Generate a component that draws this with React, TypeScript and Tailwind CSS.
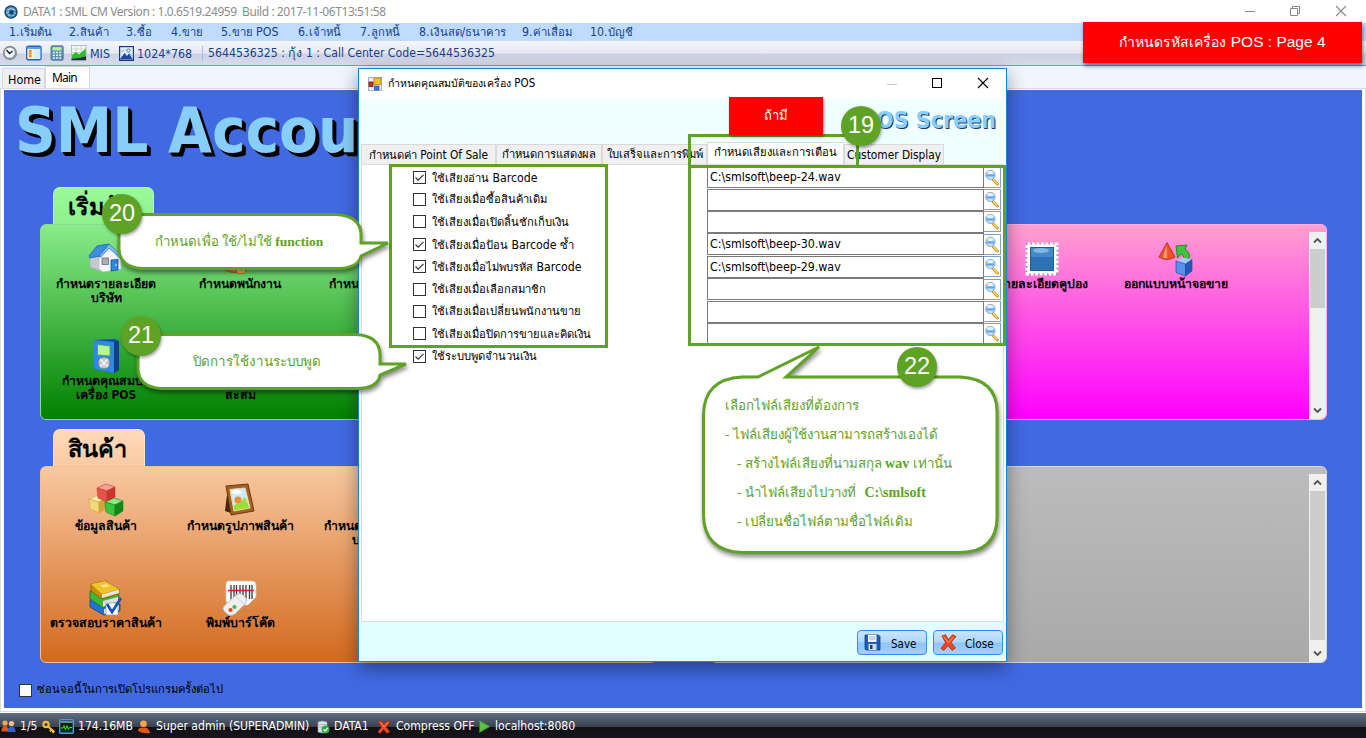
import type { ReactNode } from "react";

const UI = "font-['DejaVu_Sans_Condensed','Noto_Sans',sans-serif]";

function T({ children, latin = "text-[12px]" }: { children: string; latin?: string }) {
  const parts = children.split(/([\u0E00-\u0E7F]+)/);
  return (
    <span>
      {parts.map((p, i) =>
        i % 2 === 1 || p === "" ? <span key={i}>{p}</span> : <span key={i} className={latin}>{p}</span>,
      )}
    </span>
  );
}

/* ---------- icons ---------- */

const Globe = () => (
  <svg className="size-[14px]" viewBox="0 0 14 14">
    <circle cx="7" cy="7" r="6.7" fill="#1d4a78" />
    <circle cx="7" cy="7" r="5.2" fill="#4d8cc0" />
    <path d="M3 5Q7 2 11 5M2.5 8Q7 5 11.5 8.500M4 10.500Q7 8.500 10 10.500" stroke="#b5dcf3" strokeWidth="1" fill="none" />
    <circle cx="7.500" cy="7.500" r="2.300" fill="#17406e" />
  </svg>
);

const Clock = () => (
  <svg className="size-[16px]" viewBox="0 0 16 16">
    <circle cx="8" cy="8" r="7.2" fill="#8b979f" />
    <circle cx="7.7" cy="7.7" r="5.6" fill="#eef5f6" stroke="#5d6e78" strokeWidth=".7" />
    <path d="M4.500 5L7.500 8.500L10.500 6" stroke="#222" strokeWidth="1.400" fill="none" />
  </svg>
);

const LayoutIcon = () => (
  <svg className="size-[16px]" viewBox="0 0 16 16">
    <rect x=".7" y="1.200" width="14.300" height="13.600" rx="1.500" fill="#fff" stroke="#1f66c4" strokeWidth="1.400" />
    <rect x="1.400" y="2" width="13" height="2" fill="#5da0ea" />
    <rect x="2" y="4.500" width="4.500" height="9.500" fill="#ffe9a8" />
    <path d="M3 6H5.500M3 8.500H5.500M3 11H5.500" stroke="#e0670f" strokeWidth="1.300" />
    <rect x="7.500" y="4.500" width="6.700" height="9.500" fill="#d9ecfb" />
  </svg>
);

const Calc = () => (
  <svg className="size-[16px]" viewBox="0 0 16 16">
    <rect x="2" y=".8" width="12.200" height="14.400" rx="1.300" fill="#5d93b5" stroke="#3f6e8e" strokeWidth=".8" />
    <rect x="3.500" y="2.200" width="9" height="3.200" fill="#bdf0a2" />
    <path d="M3.800 7.500H12.500M3.800 10.300H12.500M3.800 13H12.500" stroke="#e9f3f8" strokeWidth="1.600" strokeDasharray="2 1.200" />
  </svg>
);

const Chart = () => (
  <svg className="size-[16px]" viewBox="0 0 16 16">
    <rect x=".5" y=".5" width="14.500" height="14.500" fill="#f5f8f5" stroke="#9aa" strokeWidth=".7" />
    <path d="M.5 4H15M.5 7.500H15M5 .5V9M10 .5V9" stroke="#b7c4b7" strokeWidth=".6" />
    <path d="M1 10L5 7L8 9.500L14.800 3.500V11L8 13L1 13.500Z" fill="#2dbb2a" />
    <path d="M.5 13.500L8 13L15 11V15.300H.5Z" fill="#20303a" />
  </svg>
);

const Photo = () => (
  <svg className="size-[15px]" viewBox="0 0 15 15">
    <rect x=".6" y=".6" width="13.800" height="13.800" fill="#dfeefc" stroke="#16397a" strokeWidth="1.200" />
    <circle cx="9.500" cy="4.500" r="1.600" fill="#fff" stroke="#2a5aa8" strokeWidth=".8" />
    <path d="M1 13L5.500 7L8 10L10 7.500L14 13.500H1Z" fill="#1d4b99" />
    <path d="M2 6L5 4M10 7L13 10" stroke="#6d9bd8" strokeWidth=".8" />
  </svg>
);

const WinForm = () => (
  <svg className="size-[14px]" viewBox="0 0 14 14">
    <rect x=".5" y=".5" width="13" height="13" fill="#e9ecf2" stroke="#a9b0bd" strokeWidth="1" />
    <rect x="6" y="1" width="6.800" height="6.500" fill="#f6bf2a" stroke="#b8860b" strokeWidth=".8" />
    <rect x="1" y="5" width="4" height="4.500" fill="#c4342a" stroke="#7d1712" strokeWidth=".8" />
    <rect x="6.500" y="9" width="4.500" height="4" fill="#3a75d8" stroke="#1d4796" strokeWidth=".6" />
  </svg>
);

const House = () => (
  <svg className="size-[36px]" viewBox="0 0 36 36">
    <path d="M2 16L9 13L17 30L15 31L2 26Z" fill="#c4c8d0" stroke="#a3a8b3" strokeWidth=".6" />
    <path d="M11 17L21 6L33 17V28L15 31L11 28Z" fill="#f3f4f7" stroke="#b9bec9" strokeWidth=".7" />
    <path d="M1 15L9 5L21 3L12 15L2 17Z" fill="#3c8fe0" stroke="#1b5fae" strokeWidth=".8" />
    <path d="M21 3L35 16L33 18L21 7L13 16L11 15Z" fill="#7dbcf5" stroke="#1b5fae" strokeWidth=".6" />
    <rect x="14" y="17" width="6.500" height="6.500" fill="#a9adb5" stroke="#6d727c" strokeWidth=".8" />
    <path d="M23 19L30 18.500V29L23 30Z" fill="#2e86dd" stroke="#17549b" strokeWidth=".8" />
    <circle cx="28" cy="24" r=".8" fill="#fff" />
  </svg>
);

const Coins = () => (
  <svg className="size-[36px]" viewBox="0 0 36 36">
    <circle cx="18" cy="12" r="7" fill="#e9bd8d" />
    <path d="M3 29Q5 20 16 20T24 29Q12 34 3 29Z" fill="#e0881c" stroke="#a65f0a" strokeWidth="1" />
    <ellipse cx="19" cy="30" rx="5" ry="2.500" fill="#f8cc49" stroke="#a65f0a" strokeWidth=".8" />
  </svg>
);

const Player = () => (
  <svg className="size-[36px]" viewBox="0 0 36 36">
    <path d="M6 2L27 1L31 3V32L26 35L6 31Z" fill="#0e4fa8" />
    <path d="M6 2L26 4V35L6 31Z" fill="#2e88ea" />
    <path d="M26 4L31 3V32L26 35Z" fill="#123f86" />
    <path d="M9.500 6.500L22 8V18L9.500 17Z" fill="#b6f59b" stroke="#4f9a46" strokeWidth=".8" />
    <circle cx="16" cy="25" r="5.800" fill="#c4c7cc" stroke="#7b8088" strokeWidth=".8" />
    <path d="M12 21L20 29M20 21L12 29" stroke="#f7f7f7" strokeWidth="1.200" />
  </svg>
);

const Cube = ({ x, y, top, left, right }: { x: number; y: number; top: string; left: string; right: string }) => (
  <g transform={`translate(${x} ${y})`} strokeWidth=".6" strokeLinejoin="round">
    <path d="M0 4L9 0L18 3L10 7Z" fill={top} stroke={right} />
    <path d="M0 4L10 7V18L1 14Z" fill={left} stroke={right} />
    <path d="M10 7L18 3V13L10 18Z" fill={right} stroke={right} />
  </g>
);

const Boxes = () => (
  <svg className="size-[36px]" viewBox="0 0 36 36">
    <Cube x={1} y={12} top="#fdeeb4" left="#f4d77c" right="#d2a43a" />
    <Cube x={9} y={1} top="#f8a095" left="#e6554a" right="#c8352d" />
    <Cube x={17} y={15} top="#8ee886" left="#3cc53c" right="#118718" />
  </svg>
);

const Frame = () => (
  <svg className="size-[36px]" viewBox="0 0 36 36">
    <path d="M6 4L3 28L9 30Z" fill="#3f2412" />
    <path d="M4 3L26 1L32 28L9 32Z" fill="#a65f22" stroke="#6d3a10" strokeWidth="1" />
    <path d="M8 6.500L23 5L28 25L12 28Z" fill="#c9ebfb" stroke="#f2d9a4" strokeWidth="1" />
    <path d="M10 9Q12 5 16 7T20 10Q14 12 11 11Z" fill="#fff" />
    <circle cx="16" cy="17" r="3.600" fill="#f58a2a" />
    <path d="M11.500 23L15 20L18 20L23 14L27.500 25L12.500 27.500Z" fill="#9bdc3c" />
  </svg>
);

const Books = () => (
  <svg className="size-[36px]" viewBox="0 0 36 36">
    <path d="M2 20L6 18L32 24V31L16 35L2 27Z" fill="#2272d8" stroke="#0d3f8d" strokeWidth=".8" />
    <path d="M16 29L31 25V30L16 34Z" fill="#dcdfe6" />
    <path d="M2 11L6 10L31 15V22L15 28L2 19Z" fill="#3cba35" stroke="#15701a" strokeWidth=".8" />
    <path d="M15 21L30 17V21.500L15 26.500Z" fill="#dcdfe6" />
    <path d="M3 4L17 1L31 9V14L14 19L3 11Z" fill="#c88f0c" stroke="#8a5c05" strokeWidth=".8" />
    <path d="M3 4L17 1L31 9L14 14Z" fill="#f2c42c" />
    <path d="M14 14.500L31 9.500V13L14 18Z" fill="#e9e6dc" />
    <path d="M12 5.500L18 4L22 6L16 7.500Z" fill="#fae78f" />
    <rect x="18" y="23" width="12" height="12" fill="#fff" stroke="#8b9bb5" strokeWidth=".7" />
    <path d="M19 24L24 32L33 18" stroke="#1652b8" strokeWidth="2.600" fill="none" />
  </svg>
);

const Barcode = () => (
  <svg className="size-[36px]" viewBox="0 0 36 36">
    <path d="M6 1H30Q34 1 34 5V17L26 25H8Q4 24 4 20V5Q4 1 6 1Z" fill="#fcfcfc" stroke="#c9c9c9" strokeWidth=".8" />
    <path d="M9 5V19M12 5V19M14.500 5V17M18 5V17M21 5V17M24 5V19M27.500 5V19M30 5V19" stroke="#3c3c3c" strokeWidth="1.300" />
    <path d="M6 10.500H32" stroke="#e01b1b" strokeWidth="1.600" />
    <path d="M2 26L14 15Q18 12 21 15L24 18Q26 21 23 24L13 34Q9 37 5 34L2 31Q0 28 2 26Z" fill="#eeeff0" stroke="#b2b4b6" strokeWidth=".8" />
    <path d="M13 16L22 24" stroke="#c4c6c8" strokeWidth=".8" />
    <circle cx="8.500" cy="30" r="2.100" fill="#f0441c" />
    <circle cx="12.500" cy="27" r="2.100" fill="#59b535" />
  </svg>
);

const Stamp = () => (
  <svg className="size-[36px]" viewBox="0 0 36 36">
    <rect x="2" y="2" width="32" height="32" fill="#b88aa0" />
    <rect x="3.500" y="3.500" width="29" height="29" fill="#fff" stroke="#fff" strokeWidth="4" strokeDasharray="2.800 1.700" />
    <rect x="6" y="6" width="24" height="24" fill="#1d5d9c" />
    <rect x="7" y="7" width="22" height="11" fill="#4689c8" />
    <ellipse cx="17" cy="9.500" rx="8" ry="2.500" fill="#7fb8e6" />
    <rect x="7" y="16" width="22" height="13" fill="#2b73b4" />
  </svg>
);

const Design = () => (
  <svg className="size-[36px]" viewBox="0 0 36 36">
    <path d="M9 1.500L17 16Q9 21 1 16Z" fill="#f0532a" stroke="#a82a0c" strokeWidth=".8" />
    <path d="M8.500 4L5 16.500L9 17.500Z" fill="#ffa17e" />
    <path d="M18 5L29 4L27 8Q34 13 30 19L26 18Q26 14 23 13L19.500 17Z" fill="#3fc43a" stroke="#15791b" strokeWidth=".8" />
    <path d="M18 20L25 16.500L34 18.500L27.500 23Z" fill="#a6c8fb" />
    <path d="M18 20L27.500 23V35L18 31.500Z" fill="#5b90ea" stroke="#1c4da8" strokeWidth=".7" />
    <path d="M27.500 23L34 18.500V30L27.500 35Z" fill="#2458b8" stroke="#1c4da8" strokeWidth=".7" />
  </svg>
);

const Magnifier = () => (
  <svg className="size-[17px]" viewBox="0 0 17 17">
    <path d="M9.800 11L14.300 15.500" stroke="#c98a12" strokeWidth="3" strokeLinecap="round" />
    <path d="M10.200 11L14.200 15" stroke="#fbd06a" strokeWidth="1.600" strokeLinecap="round" />
    <circle cx="6.800" cy="5.800" r="5" fill="#9ccbf8" stroke="#9aabc2" strokeWidth="1" />
    <ellipse cx="6.800" cy="3.300" rx="3.200" ry="1.600" fill="#e9f5ff" />
    <path d="M2.600 6.300H11" stroke="#5fa3ee" strokeWidth="1.600" />
    <ellipse cx="6.800" cy="8.900" rx="2.500" ry="1" fill="#d2e9fd" />
  </svg>
);

const Floppy = () => (
  <svg className="size-[17px]" viewBox="0 0 17 17">
    <path d="M1 1H14.500L16 2.500V16H2L1 15Z" fill="#1d5fb4" stroke="#153f7c" strokeWidth=".8" />
    <rect x="4" y="1" width="8.500" height="7" fill="#f3f5f8" />
    <path d="M5 3H11.500M5 5H11.500" stroke="#98a4b5" strokeWidth=".8" />
    <rect x="4.500" y="10" width="8" height="6" fill="#d3dae4" />
    <rect x="6" y="11" width="2.500" height="4" fill="#1a3e78" />
  </svg>
);

const RedX = ({ className }: { className: string }) => (
  <svg className={className} viewBox="0 0 17 17">
    <path d="M2 2L5.500 .8L8.500 5.500L12.500 .8L16 2.500L11 8.500L15.500 14L12 16.300L8 11.500L4 16.300L1 14.500L5.500 8.500Z" fill="#ee4a22" stroke="#a52408" strokeWidth=".8" />
    <path d="M3.500 2.500L8.500 8.500L13.500 3" stroke="#ff9a76" strokeWidth="1" fill="none" />
  </svg>
);

const People = () => (
  <svg className="size-[15px]" viewBox="0 0 15 15">
    <circle cx="4" cy="4" r="2.600" fill="#f7a552" />
    <path d="M.5 12.500Q.5 7 4 7T7.500 12.500Z" fill="#e0541c" />
    <circle cx="10.500" cy="4.500" r="2.600" fill="#fbc07c" />
    <path d="M6.500 13Q6.500 7.500 10.500 7.500T14.500 13Z" fill="#2f66c8" />
  </svg>
);

const KeyIcon = () => (
  <svg className="size-[14px]" viewBox="0 0 14 14">
    <circle cx="4" cy="4.500" r="2.700" fill="none" stroke="#f7c431" strokeWidth="2" />
    <path d="M6 6.500L12.500 12M9.500 9.500L8 11.500M11.500 11L10.500 13" stroke="#f7c431" strokeWidth="2" />
  </svg>
);

const Monitor = () => (
  <svg className="size-[15px]" viewBox="0 0 15 15">
    <rect x=".7" y=".7" width="13.600" height="13.600" rx="1" fill="#082408" stroke="#3d9df0" strokeWidth="1.400" />
    <path d="M1.400 3H13.600" stroke="#a8d5ff" strokeWidth="1.200" />
    <path d="M2 9H4L5 6.500L6.500 11L8 6.500L9.500 10.500L10.500 8.500H13" stroke="#33e833" strokeWidth="1" fill="none" />
  </svg>
);

const Person = () => (
  <svg className="size-[14px]" viewBox="0 0 14 14">
    <circle cx="6.500" cy="3.800" r="3.300" fill="#f8a252" />
    <path d="M1 11Q1 7.500 5 7.500H8Q12 8 13 13Q6 14 1 11Z" fill="#e0561c" />
  </svg>
);

const Database = () => (
  <svg className="size-[14px]" viewBox="0 0 14 14">
    <path d="M2 2Q6 0 11 2V12Q6 14 2 12Z" fill="#dfe4ea" stroke="#8a94a0" strokeWidth=".7" />
    <path d="M3 4.500H10M3 7H10" stroke="#9ba6b2" strokeWidth=".8" />
    <circle cx="9.500" cy="9.500" r="4" fill="#2fae34" />
    <path d="M7.500 9.500L9 11L11.800 8" stroke="#fff" strokeWidth="1.300" fill="none" />
  </svg>
);

const Play = () => (
  <svg className="size-[13px]" viewBox="0 0 13 13">
    <path d="M1.500 .5L12 6.500L1.500 12.500Z" fill="#5cc143" stroke="#2f8420" strokeWidth=".8" />
  </svg>
);

/* ---------- desktop ---------- */

function Tile({ icon, label }: { icon?: ReactNode; label: string }) {
  return (
    <div className="flex w-[134px] shrink-0 flex-col items-center">
      <div className="h-[36px] w-[36px]">{icon}</div>
      <div className="text-center text-[12.3px] leading-[14px] font-bold whitespace-pre">
        <T latin="text-[12px]">{label}</T>
      </div>
    </div>
  );
}

function Scrollbar({ thumb }: { thumb: string }) {
  return (
    <div className="flex w-[17px] shrink-0 flex-col bg-[#f0f0f0]">
      <svg className="h-[17px] w-[17px]" viewBox="0 0 17 17">
        <path d="M5 10.500L8.500 7L12 10.500" fill="none" stroke="#555" strokeWidth="1.800" />
      </svg>
      <div className={"mx-[1px] bg-[#cdcdcd] " + thumb} />
      <svg className="mt-auto h-[17px] w-[17px]" viewBox="0 0 17 17">
        <path d="M5 6.500L8.500 10L12 6.500" fill="none" stroke="#555" strokeWidth="1.800" />
      </svg>
    </div>
  );
}

function Folder({
  title, tab, body, rows,
}: { title: string; tab: string; body: string; rows: { icon?: ReactNode; label: string }[][] }) {
  return (
    <section className="flex w-[617px] flex-col">
      <div className={"-mb-px ml-[13px] h-[38px] rounded-t-[7px] border border-b-0 pt-[1px] pl-[14px] text-[23.5px] leading-[37px] font-bold whitespace-nowrap " + tab}>
        {title}
      </div>
      <div className={"flex flex-col overflow-hidden rounded-[6px] border pt-[16px] " + body}>
        {rows.map((r, i) => (
          <div key={i} className="-ml-[2px] flex h-[97px] shrink-0">
            {r.map((t, j) => <Tile key={j} {...t} />)}
          </div>
        ))}
      </div>
    </section>
  );
}

const START = [
  [
    { icon: <House />, label: "กำหนดรายละเอียด\nบริษัท" },
    { icon: <Coins />, label: "กำหนดพนักงาน" },
    { label: "กำหนดลูกค้าขาย" },
  ],
  [
    { icon: <Player />, label: "กำหนดคุณสมบัติ\nเครื่อง POS" },
    { label: "กำหนดแต้ม\nสะสม" },
  ],
];

const GOODS = [
  [
    { icon: <Boxes />, label: "ข้อมูลสินค้า" },
    { icon: <Frame />, label: "กำหนดรูปภาพสินค้า" },
    { label: "กำหนดรายละเอียด\nบาร์โค๊ด" },
  ],
  [
    { icon: <Books />, label: "ตรวจสอบราคาสินค้า" },
    { icon: <Barcode />, label: "พิมพ์บาร์โค๊ด" },
  ],
];

const MENU = [
  ["1.เริ่มต้น", "w-[60px]"], ["2.สินค้า", "w-[57px]"], ["3.ซื้อ", "w-[45px]"], ["4.ขาย", "w-[50px]"],
  ["5.ขาย POS", "w-[77px]"], ["6.เจ้าหนี้", "w-[62px]"], ["7.ลูกหนี้", "w-[59px]"],
  ["8.เงินสด/ธนาคาร", "w-[103px]"], ["9.ค่าเสื่อม", "w-[68px]"], ["10.บัญชี", "w-[60px]"],
];

function Desktop() {
  return (
    <div className="flex h-[738px] w-[1366px] flex-col overflow-hidden bg-white">
      <header className="flex h-[23px] shrink-0 items-center bg-white pl-[4px]">
        <Globe />
        <span className="ml-[5px] font-['Noto_Sans',sans-serif] text-[12px] tracking-[-0.43px] whitespace-pre text-[#8c8c8c]">
          {"DATA1 : SML CM Version : 1.0.6519.24959  Build : 2017-11-06T13:51:58"}
        </span>
        <svg className="ml-auto h-[16px] w-[122px]" viewBox="0 0 122 16">
          <path d="M1 7.500H11" stroke="#888" />
          <path d="M46.500 4.500H53.500V11.500H46.500ZM48.500 4.500V2.500H55.500V9.500H53.500" fill="none" stroke="#888" />
          <path d="M92 2L102 12M102 2L92 12" stroke="#888" strokeWidth="1.100" />
        </svg>
      </header>
      <nav className="flex h-[18px] shrink-0 items-center bg-[#bfdbff] pt-px pl-[9px] text-[11.3px] whitespace-nowrap text-[#15428b]">
        {MENU.map(([m, w]) => <span key={m} className={"shrink-0 " + w}><T latin="text-[12.3px]">{m}</T></span>)}
      </nav>
      <div className="flex h-[25px] shrink-0 items-center border-b border-[#6f9fdc] bg-[linear-gradient(#f6f7fb,#e6e8f2_50%,#cdd1e4_55%,#d7daea)] pl-[2px] text-[12.4px] whitespace-nowrap text-[#15428b]">
        <Clock />
        <span className="ml-[8px]"><LayoutIcon /></span>
        <span className="ml-[7px]"><Calc /></span>
        <span className="ml-[6px]"><Chart /></span>
        <span className="ml-[3px] w-[29px] pt-[2px]">MIS</span>
        <Photo />
        <span className="ml-[3px] w-[65px] pt-[2px]">1024*768</span>
        <span className="h-[15px] w-px bg-[#9cc0ee]" />
        <span className="ml-[5px] pt-px"><T latin="text-[12.2px]">5644536325 : กุ้ง 1 : Call Center Code=5644536325</T></span>
      </div>
      <div className="flex h-[22px] shrink-0 items-end bg-[#eff6ff] pl-[2px] text-[13px]">
        <div className="flex h-[20px] w-[43px] items-center border border-b-0 border-[#d9d9d9] bg-[#f0f0f0] pt-[3px] pl-[5px] text-[12.4px]">Home</div>
        <div className="flex h-[22px] w-[45px] items-center border border-b-0 border-[#d9d9d9] bg-white pl-[6px] font-['Noto_Sans',sans-serif] text-[12px] tracking-[-0.8px]">Main</div>
      </div>
      <main className="flex h-[624px] shrink-0 flex-col border border-[#dcdcdc] bg-white px-[3px] pt-px pb-[3px]">
        <div className="flex grow flex-col overflow-hidden bg-[#4169e1]">
          <h1 className="h-[97px] pl-[11px] text-[63px] leading-[82px] font-bold whitespace-nowrap text-[#87cefa] [text-shadow:2px_2px_0_#000,3px_3px_0_#000,4px_4px_0_#000]">
            SML Account POS
          </h1>
          <div className="flex h-[476px] shrink-0 gap-[53px] pl-[36px]">
            <div className="flex flex-col gap-[9px]">
              <Folder title="เริ่มต้น" tab="w-[101px] border-[#b9f7bb] bg-[linear-gradient(#98fb98,#8df08d)]" body="h-[196px] border-[#8fd890] bg-[linear-gradient(#8aec8a,#008000)]" rows={START} />
              <Folder title="สินค้า" tab="w-[92px] border-[#fde3cc] bg-[linear-gradient(#ffdab9,#f9caa3)]" body="h-[197px] border-[#f3bf95] bg-[linear-gradient(#f8c8a0,#d2691e)]" rows={GOODS} />
            </div>
            <div className="flex flex-col gap-[46px] pt-[37px]">
              <section className="flex h-[196px] w-[617px] overflow-hidden rounded-[6px] border border-[#ffb0e8] bg-[linear-gradient(#ff9fd0,#ff00ff)] pt-[7px]">
                <div className="flex grow pt-[9px] pl-[264px]">
                  <Tile icon={<Stamp />} label="รายละเอียดคูปอง" />
                  <Tile icon={<Design />} label="ออกแบบหน้าจอขาย" />
                </div>
                <Scrollbar thumb="h-[59px]" />
              </section>
              <section className="flex h-[197px] w-[617px] shrink-0 overflow-hidden rounded-[6px] border border-[#d8d8d8] bg-[linear-gradient(#bcbcbc,#a9a9a9)] pt-[7px]">
                <div className="grow" />
                <Scrollbar thumb="h-[149px]" />
              </section>
            </div>
          </div>
          <label className="mt-[19px] flex items-center pl-[15px] text-[11.2px] whitespace-nowrap">
            <span className="mr-[5px] size-[13px] border border-[#333] bg-white" />
            ซ่อนจอนี้ในการเปิดโปรแกรมครั้งต่อไป
          </label>
        </div>
      </main>
      <footer className="mt-px flex h-[25px] shrink-0 items-center bg-[linear-gradient(#606c82,#3b4351_54%,#111_56%,#15141f)] pt-[2px] pl-px text-[12.1px] whitespace-nowrap text-white">
        <People /><span className="ml-[4px] w-[22px]">1/5</span>
        <KeyIcon /><span className="ml-[3px]"><Monitor /></span><span className="ml-[4px] w-[59px]">174.16MB</span>
        <Person /><span className="ml-[5px] w-[160px]">Super admin (SUPERADMIN)</span>
        <Database /><span className="ml-[4px] w-[43px]">DATA1</span>
        <RedX className="size-[14px]" /><span className="ml-[5px] w-[82px]">Compress OFF</span>
        <Play /><span className="ml-[4px]">localhost:8080</span>
      </footer>
    </div>
  );
}

/* ---------- dialog ---------- */

const OPTIONS: [string, boolean, string | null][] = [
  ["ใช้เสียงอ่าน Barcode", true, "C:\\smlsoft\\beep-24.wav"],
  ["ใช้เสียงเมื่อซื้อสินค้าเดิม", false, ""],
  ["ใช้เสียงเมื่อเปิดลิ้นชักเก็บเงิน", false, ""],
  ["ใช้เสียงเมื่อป้อน Barcode ซ้ำ", true, "C:\\smlsoft\\beep-30.wav"],
  ["ใช้เสียงเมื่อไม่พบรหัส Barcode", true, "C:\\smlsoft\\beep-29.wav"],
  ["ใช้เสียงเมื่อเลือกสมาชิก", false, ""],
  ["ใช้เสียงเมื่อเปลี่ยนพนักงานขาย", false, ""],
  ["ใช้เสียงเมื่อปิดการขายและคิดเงิน", false, ""],
  ["ใช้ระบบพูดจำนวนเงิน", true, null],
];

const TABS: [string, string][] = [
  ["กำหนดค่า Point Of Sale", "w-[135px]"],
  ["กำหนดการแสดงผล", "w-[106px]"],
  ["ใบเสร็จและการพิมพ์", "w-[105px]"],
  ["กำหนดเสียงและการเตือน", "w-[137px]"],
  ["Customer Display", "w-[100px]"],
];

function Dialog() {
  return (
    <div className="absolute top-[68px] left-[358px] flex h-[594px] w-[649px] flex-col border border-[#1883d7] bg-white shadow-[0_6px_18px_rgba(0,0,0,0.4)]">
      <div className="flex h-[30px] shrink-0 items-center pr-[2px] pl-[9px]">
        <WinForm />
        <span className="ml-[6px] text-[10.6px] whitespace-nowrap"><T latin="text-[11.5px]">กำหนดคุณสมบัติของเครื่อง POS</T></span>
        <svg className="ml-auto h-[14px] w-[122px]" viewBox="0 0 122 14">
          <path d="M5 7.500H15" stroke="#c4c4c4" />
          <rect x="50.500" y="1.500" width="9" height="9" fill="none" stroke="#000" />
          <path d="M96 1L106 11M106 1L96 11" stroke="#000" strokeWidth="1.100" />
        </svg>
      </div>
      <div className="flex h-[45px] shrink-0 items-start justify-end bg-[#f0ffff] pt-[5px] pr-[10px]">
        <h2 className="text-[23px] leading-[32px] font-bold whitespace-nowrap text-[#87cefa] [text-shadow:1px_1px_0_#15357a]">POS Screen</h2>
      </div>
      <div className="-mt-[2px] flex h-[22px] shrink-0 items-end bg-[#f0ffff] pl-[2px] text-[11.2px] whitespace-nowrap">
        {TABS.map(([t, w], i) => (
          <div
            key={t}
            className={
              "flex items-center justify-center border border-b-0 border-[#d9d9d9] " + w +
              (i === 3 ? " h-[22px] bg-white" : " h-[20px] bg-[#f0f0f0] pt-[2px]")
            }
          >
            <T latin="text-[11.8px]">{t}</T>
          </div>
        ))}
      </div>
      <div className="mx-[2px] flex h-[458px] shrink-0 flex-col border border-[#dcdcdc] bg-white pt-[1px]">
        {OPTIONS.map(([label, on, file]) => (
          <div key={label} className="flex h-[22.4px] shrink-0 items-center pl-[51px]">
            <span className="flex size-[13px] items-center justify-center border border-[#333] bg-white">
              {on && (
                <svg className="size-[11px]" viewBox="0 0 11 11">
                  <path d="M1.500 5.500L4.200 8.200L9.500 2.800" fill="none" stroke="#333" strokeWidth="1.200" />
                </svg>
              )}
            </span>
            <span className="ml-[6px] w-[275px] pt-[2px] text-[11.2px] whitespace-nowrap"><T latin="text-[12.2px]">{label}</T></span>
            {file !== null && (
              <>
                <span className="flex h-[22px] w-[277px] items-center border border-[#7a7a7a] bg-white pl-[2px] text-[12.3px]">{file}</span>
                <span className="flex h-[21px] w-[17px] items-center justify-center border border-l-0 border-[#7ba0cf] bg-white"><Magnifier /></span>
              </>
            )}
          </div>
        ))}
      </div>
      <div className="flex grow items-center justify-end gap-[6px] bg-[#e0ffff] pr-[3px] pt-[2px] text-[12px]">
        <button className="flex h-[25px] w-[70px] items-center rounded-[4px] border border-[#2f8cf0] bg-[linear-gradient(#cbe5ff,#b0d6fd_48%,#8fc4fb_52%,#a4d0ff)] pl-[6px]">
          <Floppy /><span className="ml-[10px] pt-[4px] text-[11.5px]">Save</span>
        </button>
        <button className="flex h-[25px] w-[70px] items-center rounded-[4px] border border-[#2f8cf0] bg-[linear-gradient(#cbe5ff,#b0d6fd_48%,#8fc4fb_52%,#a4d0ff)] pl-[6px]">
          <RedX className="size-[17px]" /><span className="ml-[8px] pt-[4px] text-[11.7px]">Close</span>
        </button>
      </div>
    </div>
  );
}

/* ---------- annotations ---------- */

function Badge({ n, at }: { n: number; at: string }) {
  return (
    <div className={"absolute flex size-[40px] items-center justify-center rounded-full bg-[#5ea226] font-['Liberation_Sans',sans-serif] text-[23.500px] text-white shadow-[1px_2px_3px_rgba(0,0,0,0.35)] " + at}>
      {n}
    </div>
  );
}

const CALLOUT = "drop-shadow-[1px_3px_2px_rgba(0,0,0,0.45)]";
const NOTE = "font-['Liberation_Serif',serif] whitespace-pre text-[#5ea226]";

function Annotations() {
  return (
    <>
      <div className="absolute top-[164px] left-[389px] h-[184px] w-[219px] border-[3px] border-[#5ea226]" />
      <div className="absolute top-[134px] left-[688px] h-[34px] w-[171px] border-[3px] border-[#5ea226]" />
      <div className="absolute top-[165px] left-[688px] h-[181px] w-[318px] border-[3px] border-[#5ea226]" />

      <svg className={"absolute top-[205px] left-[110px] h-[70px] w-[290px] " + CALLOUT} viewBox="110 205 290 70">
        <path d="M142 214.500H336Q361 216 361 235V243H388L361 256Q358 268.500 336 268.500H142Q119 267 119 248V235Q119 216 142 214.500Z" fill="#fff" stroke="#5ea226" strokeWidth="3" />
      </svg>
      <div className={"absolute top-[230px] left-[119px] flex w-[240px] justify-center text-[13.2px] leading-[24px] " + NOTE}>
        <T latin="text-[13.5px] font-bold">กำหนดเพื่อ ใช้/ไม่ใช้ function</T>
      </div>

      <svg className={"absolute top-[325px] left-[130px] h-[70px] w-[290px] " + CALLOUT} viewBox="130 325 290 70">
        <path d="M161 334.500H356Q380 336 380 355V364H406L380 375Q378 388.500 356 388.500H161Q138 387 138 368V355Q138 336 161 334.500Z" fill="#fff" stroke="#5ea226" strokeWidth="3" />
      </svg>
      <div className={"absolute top-[350px] left-[138px] flex w-[238px] justify-center text-[13.4px] leading-[24px] " + NOTE}>ปิดการใช้งานระบบพูด</div>

      <svg className={"absolute top-[340px] left-[695px] h-[225px] w-[310px] " + CALLOUT} viewBox="695 340 310 225">
        <path d="M758 377L819 347L786 377H960Q997 379 997 412V517Q997 552 960 552.500H742Q704 551 703.500 515V415Q704 379 742 377Z" fill="#fff" stroke="#5ea226" strokeWidth="3" />
      </svg>
      <div className={"absolute top-[391px] left-[725px] flex flex-col text-[13.3px] leading-[29px] " + NOTE}>
        <span>เลือกไฟล์เสียงที่ต้องการ</span>
        <span>- ไฟล์เสียงผู้ใช้งานสามารถสร้างเองได้</span>
        <span className="pl-[12px]">- สร้างไฟล์เสียงที่นามสกุล <b className="text-[14px]">wav</b> เท่านั้น</span>
        <span className="pl-[12px]">- นำไฟล์เสียงไปวางที่  <b className="pl-[2px] text-[14px]">C:\smlsoft</b></span>
        <span className="pl-[12px]">- เปลี่ยนชื่อไฟล์ตามชื่อไฟล์เดิม</span>
      </div>

      <div className="absolute top-[97px] left-[729px] flex h-[38px] w-[94px] items-center justify-center bg-[#ff0000] text-[13px] font-medium text-white shadow-[1px_2px_3px_rgba(0,0,0,0.4)]">ถ้ามี</div>
      <div className="absolute top-[22px] left-[1083px] flex h-[41px] w-[279px] items-center justify-center bg-[#ff0000] pb-[2px] font-['Liberation_Sans',sans-serif] text-[14px] whitespace-nowrap text-white shadow-[1px_3px_4px_rgba(0,0,0,0.5)]">
        <T latin="text-[15.5px]">กำหนดรหัสเครื่อง POS : Page 4</T>
      </div>

      <Badge n={19} at="top-[106px] left-[841px]" />
      <Badge n={20} at="top-[194px] left-[102px]" />
      <Badge n={21} at="top-[316px] left-[121px]" />
      <Badge n={22} at="top-[347px] left-[897px]" />
    </>
  );
}

export default function App() {
  return (
    <div className={"relative h-[738px] w-[1366px] overflow-hidden text-black " + UI}>
      <Desktop />
      <Dialog />
      <Annotations />
    </div>
  );
}
